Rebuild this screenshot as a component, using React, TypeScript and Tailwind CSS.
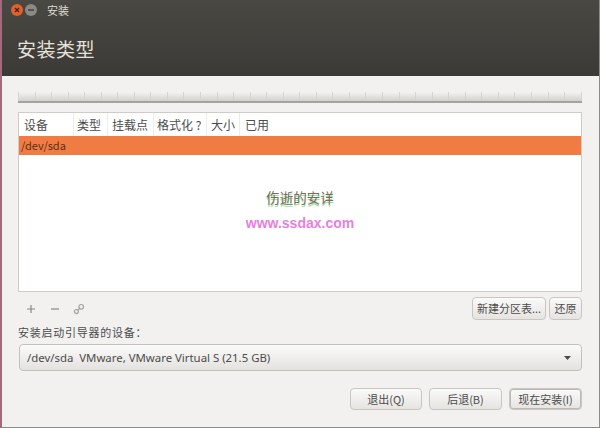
const cjk = "font-['Noto_Sans_CJK_SC','Noto_Sans',sans-serif]"

const columns = [
  { label: "设备", width: "w-[55px] pl-[5px] border-r" },
  { label: "类型", width: "w-[34px] pl-[3px] border-r" },
  { label: "挂载点", width: "w-[46px] pl-[4px] border-r" },
  { label: "格式化 ?", width: "w-[53px] pl-[3px] border-r" },
  { label: "大小", width: "w-[33px] pl-[4px] border-r" },
  { label: "已用", width: "w-[60px] pl-[5px]" },
]

const ticks = Array.from({ length: 35 })

const Button = ({ label, className }: { label: string; className: string }) => (
  <button className={`flex items-center justify-center rounded-[4px] border border-[#c9c6c2] bg-gradient-to-b from-[#fafafa] to-[#e6e4e1] text-[11px] text-[#4c4c4c] ${className}`}>
    {label}
  </button>
)

export default function App() {
  return (
    <div className={`${cjk} flex h-[428px] w-[600px] overflow-hidden bg-[#f2f1f0]`}>
      <div className="w-[2px] shrink-0 bg-[#a3697c]"></div>
      <div className="flex min-w-0 flex-1 flex-col border-b border-r border-[#8d8b88]">
        <div className="flex h-[76px] shrink-0 flex-col bg-gradient-to-b from-[#4a4843] to-[#3b3a36]">
          <div className="flex h-[20px] items-center pl-[9px]">
            <div className="flex h-[12px] w-[12px] items-center justify-center rounded-full bg-[#e2602b]">
              <svg width="6" height="6" viewBox="0 0 6 6">
                <path d="M1 1l4 4M5 1l-4 4" stroke="#4a2415" strokeWidth="1.4" />
              </svg>
            </div>
            <div className="ml-[2px] flex h-[12px] w-[12px] items-center justify-center rounded-full bg-[#8c8a86]">
              <div className="h-[2px] w-[6px] bg-[#55534f]"></div>
            </div>
            <span className="ml-[10px] text-[11px] leading-none text-[#dfdbd2]">安装</span>
          </div>
          <div className="pl-[15px] pt-[17px] text-[19px] leading-[24px] tracking-[0.5px] text-[#e6e2da]">安装类型</div>
        </div>

        <div className="flex flex-1 flex-col pl-[16px] pr-[17px] pt-[16px]">
          <div className="flex h-[11px] items-stretch justify-between border-b-2 border-[#a5a3a0] bg-gradient-to-b from-[#f4f3f2] to-[#d3d1ce]">
            {ticks.map((_, i) => (
              <div key={i} className="w-px bg-[#d6d4d1]"></div>
            ))}
          </div>

          <div className="mt-[9px] flex h-[180px] flex-col border border-[#cfccc8] bg-white">
            <div className="flex h-[23px] shrink-0 text-[12px] text-[#4c4c4c]">
              {columns.map(c => (
                <div key={c.label} className={`flex items-center border-[#eeecea] ${c.width}`}>{c.label}</div>
              ))}
            </div>
            <div className="flex h-[19px] shrink-0 items-center bg-[#f17c43] pl-[2px] text-[11px] text-[#5a2f18]">/dev/sda</div>
            <div className="flex flex-col items-center pt-[34px]">
              <div className="text-[13.5px] leading-[17px] text-[#7a6a62] [text-shadow:0_2px_0_#9be39b]">伤逝的安详</div>
              <div className="mt-[9px] font-['Liberation_Sans',sans-serif] text-[14px] font-bold leading-[16px] text-[#e77fe0]">www.ssdax.com</div>
            </div>
          </div>

          <div className="mt-[5px] flex h-[23px] items-center">
            <div className="flex items-center pl-[8px] text-[#8a8884]">
              <svg width="10" height="10" viewBox="0 0 10 10">
                <path d="M5 1v8M1 5h8" stroke="currentColor" strokeWidth="1.2" />
              </svg>
              <svg className="ml-[14px]" width="10" height="10" viewBox="0 0 10 10">
                <path d="M1 5h8" stroke="currentColor" strokeWidth="1.2" />
              </svg>
              <svg className="ml-[13px]" width="12" height="12" viewBox="0 0 12 12" fill="none">
                <circle cx="8.2" cy="3.8" r="2.3" stroke="#a5a3a0" strokeWidth="1.2" />
                <circle cx="3.4" cy="8.6" r="2" stroke="#a5a3a0" strokeWidth="1.2" />
                <path d="M6.5 5.5l-1.6 1.6" stroke="#a5a3a0" strokeWidth="1.4" />
              </svg>
            </div>
            <div className="ml-auto flex gap-[3px]">
              <Button label="新建分区表..." className="h-[23px] w-[74px]" />
              <Button label="还原" className="h-[23px] w-[33px]" />
            </div>
          </div>

          <div className="mt-[4px] text-[11px] leading-[16px] tracking-[0.75px] text-[#4c4c4c]">安装启动引导器的设备：</div>

          <div className="ml-px mt-[4px] flex h-[27px] items-center rounded-[4px] border border-[#c4c1bd] bg-gradient-to-b from-[#fbfbfb] to-[#e4e2df] pl-[7px] pr-[10px] font-['Noto_Sans',sans-serif] text-[11.4px] text-[#4c4c4c]">
            <span className="whitespace-pre">/dev/sda  VMware, VMware Virtual S (21.5 GB)</span>
            <svg className="ml-auto" width="7" height="4" viewBox="0 0 7 4">
              <path d="M0 0h7L3.500 4z" fill="#4c4c4c" />
            </svg>
          </div>

          <div className="mt-[17px] flex justify-end">
            <Button label="退出(Q)" className="h-[22px] w-[72px]" />
            <Button label="后退(B)" className="ml-[7px] h-[22px] w-[73px]" />
            <Button label="现在安装(I)" className="ml-[7px] h-[22px] w-[73px] border-[#9b9894] shadow-[inset_0_0_0_1px_#bdbab6]" />
          </div>
        </div>
      </div>
    </div>
  )
}
